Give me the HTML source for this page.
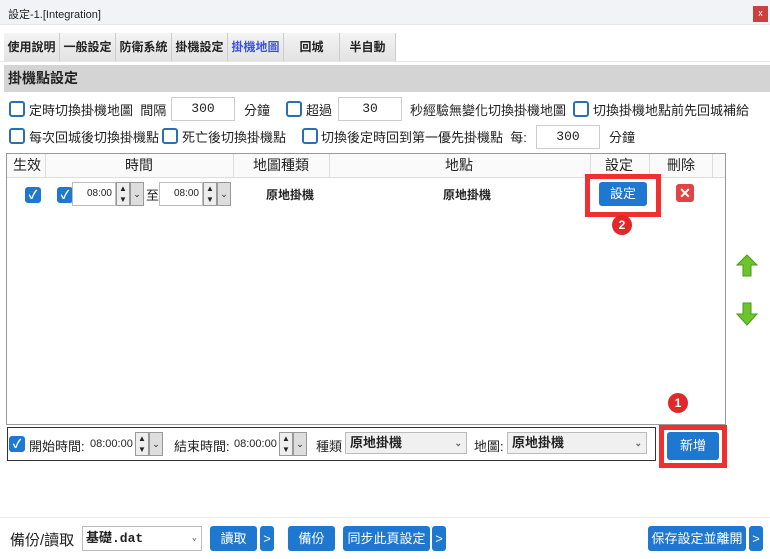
<!DOCTYPE html>
<html><head><meta charset="utf-8"><style>
*{box-sizing:border-box;margin:0;padding:0}
body{width:770px;height:559px;background:#fff;font-family:"Liberation Sans","Noto Sans CJK TC",sans-serif;font-size:13px;color:#222;position:relative;overflow:hidden}
.a{position:absolute}
.cb{position:absolute;width:16px;height:16px;border:2px solid #2a6fb0;border-radius:3px;background:#fff}
.cbc{position:absolute;width:16px;height:16px;border-radius:3px;background:#1e78d0;color:#fff;font-size:12px;line-height:16px;text-align:center;font-weight:bold}
.inp{position:absolute;border:1px solid #ccc;background:#fff;text-align:center;font-family:"Liberation Mono",monospace;font-size:13px;line-height:22px;height:24px}
.tab{position:absolute;top:33px;height:28px;background:linear-gradient(#f4f4f4,#e2e2e2);border-right:1px solid #ccc;font-size:12px;font-weight:bold;text-align:center;line-height:28px}
.btn{position:absolute;background:#1e78d0;color:#fff;border-radius:3px;text-align:center;font-size:13px}
.spin{position:absolute;width:14px;height:24px;border:1px solid #999;background:#eee;font-size:8px;line-height:11px;text-align:center}
.dd{position:absolute;width:14px;height:24px;border:1px solid #999;background:#ddd;font-size:9px;line-height:22px;text-align:center}
</style></head><body>
<div class="a" style="left:0;top:0;width:770px;height:25px;background:#f1f3f6;border-bottom:1px solid #e4e4e4"></div>
<div class="a" style="left:8px;top:6px;font-size:11px">設定-1.[Integration]</div>
<div class="a" style="left:753px;top:6px;width:15px;height:16px;background:#c84040;color:#fff;font-size:9px;text-align:center;line-height:15px">x</div>
<div class="a" style="left:0;top:61px;width:770px;height:1px;background:#e6e6e6"></div>
<div class="tab" style="left:4px;width:56px">使用說明</div>
<div class="tab" style="left:60px;width:56px">一般設定</div>
<div class="tab" style="left:116px;width:56px">防衛系統</div>
<div class="tab" style="left:172px;width:56px">掛機設定</div>
<div class="tab" style="left:228px;width:56px;color:#3a4fe0">掛機地圖</div>
<div class="tab" style="left:284px;width:56px">回城</div>
<div class="tab" style="left:340px;width:56px">半自動</div>
<div class="a" style="left:4px;top:65px;width:766px;height:27px;background:#d4d4d4;font-weight:bold;font-size:14px;line-height:27px;padding-left:4px">掛機點設定</div>
<div class="cb" style="left:9px;top:101px"></div><div class="a" style="left:29px;top:100px">定時切換掛機地圖&nbsp; 間隔</div>
<div class="inp" style="left:171px;top:97px;width:64px">300</div>
<div class="a" style="left:244px;top:100px">分鐘</div>
<div class="cb" style="left:286px;top:101px"></div><div class="a" style="left:306px;top:100px">超過</div>
<div class="inp" style="left:338px;top:97px;width:64px">30</div>
<div class="a" style="left:410px;top:100px">秒經驗無變化切換掛機地圖</div>
<div class="cb" style="left:573px;top:101px"></div><div class="a" style="left:593px;top:100px">切換掛機地點前先回城補給</div>
<div class="cb" style="left:9px;top:128px"></div><div class="a" style="left:29px;top:127px">每次回城後切換掛機點</div>
<div class="cb" style="left:162px;top:128px"></div><div class="a" style="left:182px;top:127px">死亡後切換掛機點</div>
<div class="cb" style="left:302px;top:128px"></div><div class="a" style="left:321px;top:127px">切換後定時回到第一優先掛機點&nbsp; 每:</div>
<div class="inp" style="left:536px;top:125px;width:64px">300</div>
<div class="a" style="left:609px;top:127px">分鐘</div>
<div class="a" style="left:6px;top:153px;width:720px;height:272px;border:1px solid #999;background:#fff"></div>
<div class="a" style="left:7px;top:154px;width:718px;height:24px;border-bottom:1px solid #ddd;background:#fafafa;font-size:14px;line-height:23px">
<span class="a" style="left:6px">生效</span><span class="a" style="left:38px;top:0;width:1px;height:24px;background:#ddd"></span>
<span class="a" style="left:118px">時間</span><span class="a" style="left:226px;top:0;width:1px;height:24px;background:#ddd"></span>
<span class="a" style="left:246px">地圖種類</span><span class="a" style="left:322px;top:0;width:1px;height:24px;background:#ddd"></span>
<span class="a" style="left:438px">地點</span><span class="a" style="left:583px;top:0;width:1px;height:24px;background:#ddd"></span>
<span class="a" style="left:598px">設定</span><span class="a" style="left:642px;top:0;width:1px;height:24px;background:#ddd"></span>
<span class="a" style="left:660px">刪除</span><span class="a" style="left:705px;top:0;width:1px;height:24px;background:#ddd"></span></div>
<div class="cbc" style="left:25px;top:187px">✓</div>
<div class="cbc" style="left:57px;top:187px">✓</div>
<div class="a" style="left:72px;top:182px;width:44px;height:24px;border:1px solid #bbb;font-size:10px;line-height:22px;text-align:right;padding-right:3px">08:00</div>
<div class="spin" style="left:116px;top:182px">▲<br>▼</div><div class="dd" style="left:130px;top:182px">⌄</div>
<div class="a" style="left:146px;top:185px;font-size:13px">至</div>
<div class="a" style="left:159px;top:182px;width:44px;height:24px;border:1px solid #bbb;font-size:10px;line-height:22px;text-align:right;padding-right:3px">08:00</div>
<div class="spin" style="left:203px;top:182px">▲<br>▼</div><div class="dd" style="left:217px;top:182px">⌄</div>
<div class="a" style="left:266px;top:186px;font-size:12px;font-weight:bold">原地掛機</div>
<div class="a" style="left:443px;top:186px;font-size:12px;font-weight:bold">原地掛機</div>
<div class="a" style="left:585px;top:174px;width:76px;height:43px;border:5px solid #f03030"></div>
<div class="btn" style="left:599px;top:182px;width:48px;height:24px;line-height:24px">設定</div>
<div class="a" style="left:612px;top:215px;width:20px;height:20px;border-radius:50%;background:#e02828;color:#fff;font-size:12px;font-weight:bold;text-align:center;line-height:20px">2</div>
<div class="a" style="left:676px;top:184px;width:18px;height:18px;border-radius:3px;background:#e04444;color:#fff;font-size:14px;font-weight:bold;text-align:center;line-height:18px">✕</div>
<svg class="a" style="left:736px;top:254px" width="22" height="24"><path d="M11 1 L21 11 L15 11 L15 22 L7 22 L7 11 L1 11 Z" fill="#6cc52a" stroke="#4a9a18"/></svg>
<svg class="a" style="left:736px;top:302px" width="22" height="24"><path d="M7 1 L15 1 L15 12 L21 12 L11 23 L1 12 L7 12 Z" fill="#6cc52a" stroke="#4a9a18"/></svg>
<div class="a" style="left:7px;top:427px;width:649px;height:34px;border:1px solid #333;background:#fff"></div>
<div class="cbc" style="left:9px;top:436px">✓</div>
<div class="a" style="left:29px;top:436px">開始時間:</div>
<div class="a" style="left:90px;top:438px;font-size:11px">08:00:00</div>
<div class="spin" style="left:135px;top:432px">▲<br>▼</div><div class="dd" style="left:149px;top:432px">⌄</div>
<div class="a" style="left:174px;top:436px">結束時間:</div>
<div class="a" style="left:234px;top:438px;font-size:11px">08:00:00</div>
<div class="spin" style="left:279px;top:432px">▲<br>▼</div><div class="dd" style="left:293px;top:432px">⌄</div>
<div class="a" style="left:316px;top:436px">種類</div>
<div class="a" style="left:345px;top:432px;width:122px;height:22px;border:1px solid #bbb;background:#f0f0f0;font-weight:bold;line-height:20px;padding-left:4px">原地掛機<span style="position:absolute;right:4px;font-size:9px;color:#666">⌄</span></div>
<div class="a" style="left:474px;top:436px">地圖:</div>
<div class="a" style="left:507px;top:432px;width:140px;height:22px;border:1px solid #bbb;background:#f0f0f0;font-weight:bold;line-height:20px;padding-left:4px">原地掛機<span style="position:absolute;right:4px;font-size:9px;color:#666">⌄</span></div>
<div class="a" style="left:659px;top:425px;width:68px;height:43px;border:5px solid #f03030"></div>
<div class="btn" style="left:667px;top:432px;width:52px;height:28px;line-height:28px">新增</div>
<div class="a" style="left:668px;top:393px;width:20px;height:20px;border-radius:50%;background:#e02828;color:#fff;font-size:12px;font-weight:bold;text-align:center;line-height:20px">1</div>
<div class="a" style="left:0;top:517px;width:770px;height:1px;background:#e8e8e8"></div>
<div class="a" style="left:10px;top:529px;font-size:15px">備份/讀取</div>
<div class="a" style="left:82px;top:526px;width:120px;height:25px;border:1px solid #bbb;font-weight:bold;font-family:'Liberation Mono','Noto Sans CJK TC',monospace;line-height:23px;padding-left:3px">基礎.dat<span style="position:absolute;right:4px;font-size:9px;color:#666">⌄</span></div>
<div class="btn" style="left:210px;top:526px;width:47px;height:25px;line-height:25px">讀取</div>
<div class="btn" style="left:260px;top:526px;width:14px;height:25px;line-height:25px">&gt;</div>
<div class="btn" style="left:288px;top:526px;width:47px;height:25px;line-height:25px">備份</div>
<div class="btn" style="left:343px;top:526px;width:87px;height:25px;line-height:25px">同步此頁設定</div>
<div class="btn" style="left:432px;top:526px;width:14px;height:25px;line-height:25px">&gt;</div>
<div class="btn" style="left:648px;top:526px;width:98px;height:25px;line-height:25px">保存設定並離開</div>
<div class="btn" style="left:749px;top:526px;width:14px;height:25px;line-height:25px">&gt;</div>
</body></html>
